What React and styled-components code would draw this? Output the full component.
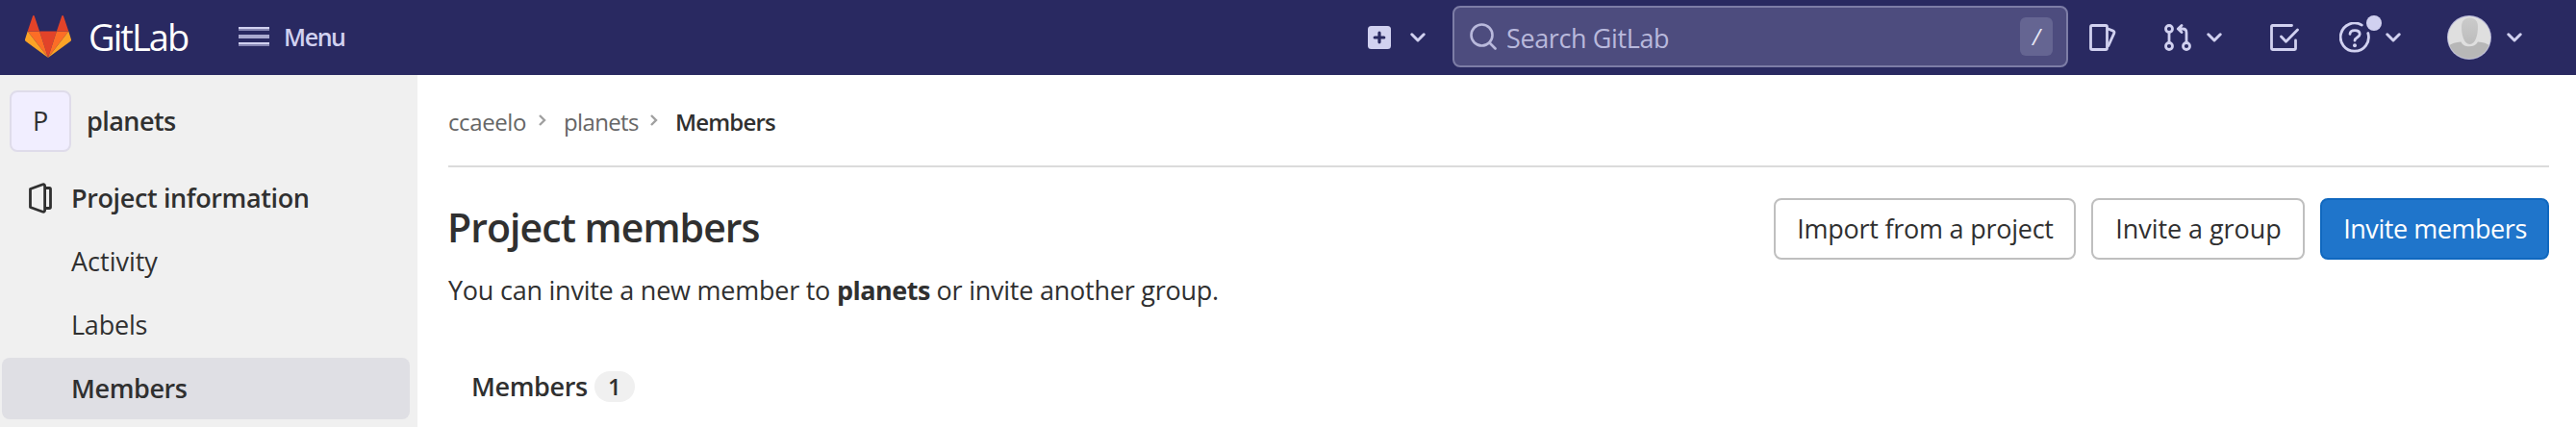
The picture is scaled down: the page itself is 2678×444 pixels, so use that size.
import React from "react";
import styled, { createGlobalStyle } from "styled-components";

const Global = createGlobalStyle`
  * { box-sizing: border-box; }
  body {
    margin: 0;
    background: #fff;
    color: #303030;
    font-family: "Open Sans", "Noto Sans", sans-serif;
    font-size: 27px;
    line-height: 36px;
  }
  svg { display: block; flex: none; }
`;

const Page = styled.div`
  width: 100%;
  height: 444px;
  overflow: hidden;
`;

const Header = styled.header`
  display: flex;
  align-items: center;
  height: 78px;
  padding: 0 56px 0 26px;
  background: #292961;
  color: #d1d1f0;
`;

const Body = styled.div`
  display: flex;
  height: 366px;
`;

const Label = styled.span`
  display: block;
  white-space: nowrap;
  font-size: ${(p) => p.$size || 27}px;
  font-weight: ${(p) => p.$weight || 400};
  letter-spacing: ${(p) => p.$track || 0}px;
  color: ${(p) => p.$color || "inherit"};
`;

const Brand = styled.div`
  display: flex;
  align-items: center;
  width: 222px;
  gap: 18px;
  padding-bottom: 2px;
`;

const MenuButton = styled.div`
  display: flex;
  align-items: center;
  gap: 15px;
  padding-bottom: 2px;
`;

const Actions = styled.div`
  display: flex;
  align-items: center;
  margin-left: auto;
`;

const Action = styled.div`
  display: flex;
  align-items: center;
  gap: ${(p) => p.$gap || 0}px;
  margin-left: ${(p) => p.$before || 0}px;
`;

const SearchBox = styled.div`
  display: flex;
  align-items: center;
  width: 640px;
  height: 64px;
  margin: 0 0 2px 28px;
  padding: 0 14px 0 16px;
  border: 2px solid #7d7da6;
  border-radius: 8px;
  background: #4d4c7e;
  color: #b9b9dc;
`;

const SearchText = styled(Label)`
  flex: 1;
  padding: 3px 0 0 10px;
`;

const Key = styled.kbd`
  width: 34px;
  height: 40px;
  border-radius: 6px;
  background: #656592;
  color: #e6e6f6;
  font: italic 23px/40px "Open Sans", sans-serif;
  text-align: center;
`;

const HelpIcon = styled.div`
  position: relative;
`;

const Dot = styled.i`
  position: absolute;
  top: -7px;
  left: 28px;
  width: 16px;
  height: 16px;
  border-radius: 50%;
  background: #d1d1f0;
`;

const Sidebar = styled.nav`
  flex: none;
  width: 434px;
  padding: 16px 8px 0 2px;
  background: #f0f0f0;
`;

const Context = styled.div`
  display: flex;
  align-items: center;
  gap: 16px;
  height: 64px;
  margin: 0 0 16px 8px;
`;

const ProjectAvatar = styled.div`
  display: flex;
  align-items: center;
  justify-content: center;
  width: 64px;
  height: 64px;
  border: 2px solid #dfdcea;
  border-radius: 8px;
  background: #f1eeff;
`;

const NavItem = styled.div`
  display: flex;
  align-items: center;
  gap: 20px;
  height: 64px;
  margin-bottom: 2px;
  padding: 0 0 1px ${(p) => (p.$child ? 72 : 28)}px;
  border-radius: 8px;
  background: ${(p) => (p.$active ? "#dfdfe4" : "transparent")};
`;

const Main = styled.main`
  flex: 1;
  padding: 0 28px 0 32px;
`;

const Breadcrumbs = styled.div`
  display: flex;
  align-items: center;
  height: 96px;
  padding-top: 3px;
  border-bottom: 2px solid #dbdbdb;
`;

const Crumb = styled(Label)`
  width: ${(p) => p.$width}px;
`;

const Separator = styled.span`
  width: 26px;
  padding-bottom: 3px;
`;

const TitleRow = styled.div`
  display: flex;
  align-items: center;
  justify-content: space-between;
  height: 64px;
  margin-top: 32px;
`;

const Title = styled.h1`
  margin: 0 0 4px -1px;
  font-size: 41px;
  font-weight: 600;
  letter-spacing: -0.95px;
  line-height: 56px;
`;

const ButtonRow = styled.div`
  display: flex;
  gap: 16px;
`;

const Button = styled.button`
  width: ${(p) => p.$width}px;
  height: 64px;
  padding: 0 0 1px 1px;
  border: 2px solid ${(p) => (p.$primary ? "#1068bf" : "#bfbfbf")};
  border-radius: 8px;
  background: ${(p) => (p.$primary ? "#1f75cb" : "#fff")};
  color: ${(p) => (p.$primary ? "#fff" : "#303030")};
  font: 400 27px/36px "Open Sans", sans-serif;
  letter-spacing: ${(p) => p.$track}px;
  white-space: nowrap;
`;

const Intro = styled.p`
  margin: 14px 0 0;
  letter-spacing: -0.24px;
  white-space: nowrap;
  strong { font-weight: 700; letter-spacing: -0.51px; }
`;

const Tab = styled.div`
  display: flex;
  align-items: center;
  gap: 7px;
  height: 32px;
  margin: 66px 0 0 24px;
`;

const Badge = styled.span`
  width: 42px;
  height: 32px;
  border-radius: 16px;
  background: #f0f0f0;
  font-size: 24px;
  font-weight: 600;
  line-height: 32px;
  text-align: center;
`;

const Chevron = () => (
  <svg width="16" height="10" viewBox="0 0 16 10" fill="none" stroke="currentColor" strokeWidth="3" strokeLinecap="round" strokeLinejoin="round">
    <path d="M1.8 1.8 8 8l6.200-6.200" />
  </svg>
);

const CrumbArrow = () => (
  <svg width="8" height="12" viewBox="0 0 8 12" fill="none" stroke="#a0a0a0" strokeWidth="2.4">
    <path d="M1 1l5 5-5 5" />
  </svg>
);

const Logo = () => (
  <svg width="48" height="44" viewBox="0 0 48 44">
    <path fill="#e24329" d="M24 44 15.1 16.5h17.8z" />
    <path fill="#fc6d26" d="M24 44 15.1 16.5H2.7z" />
    <path fill="#fca326" d="M2.7 16.5.1 24.8c-.3.8 0 1.6.7 2.1L24 44z" />
    <path fill="#e24329" d="M2.7 16.5h12.4L9.8.7C9.5-.2 8.3-.2 8 .7z" />
    <path fill="#fc6d26" d="M24 44l8.9-27.5h12.4z" />
    <path fill="#fca326" d="M45.3 16.5l2.6 8.3c.3.8 0 1.6-.7 2.1L24 44z" />
    <path fill="#e24329" d="M45.3 16.5H32.9L38.2.7c.3-.9 1.5-.9 1.8 0z" />
  </svg>
);

const Hamburger = () => (
  <svg width="32" height="20" viewBox="0 0 32 20">
    <path fill="#d1d1f0" d="M0 0h32v2H0zM0 16h32v2H0z" />
    <path fill="#8585b2" d="M0 2h32v2H0zM0 18h32v2H0z" />
    <path fill="#aaaad0" d="M0 8h32v4H0z" />
  </svg>
);

const PlusSquare = () => (
  <svg width="24" height="24" viewBox="0 0 24 24">
    <rect width="24" height="24" rx="3.5" fill="#d1d1f0" />
    <path d="M12 7.200v9.600M7.200 12h9.600" stroke="#292961" strokeWidth="3.2" strokeLinecap="round" />
  </svg>
);

const Magnifier = () => (
  <svg width="28" height="28" viewBox="0 0 28 28" fill="none" stroke="currentColor" strokeWidth="2.6" strokeLinecap="round">
    <circle cx="12.5" cy="12.5" r="11" />
    <path d="M20.5 20.5l6 6" />
  </svg>
);

const Issues = () => (
  <svg width="28" height="28" viewBox="0 0 28 28" fill="none" stroke="currentColor" strokeWidth="2.8" strokeLinejoin="round">
    <rect x="1.5" y="1.5" width="17" height="25" rx="1.5" />
    <path d="M19 4.8l5.8 2.3c1 .4 1.500 1.500 1 2.500L19.500 23.500" />
  </svg>
);

const MergeRequest = () => (
  <svg width="28" height="28" viewBox="0 0 28 28" fill="none" stroke="currentColor" strokeWidth="2.8" strokeLinecap="round" strokeLinejoin="round">
    <circle cx="5" cy="5" r="3.5" />
    <circle cx="5" cy="23" r="3.5" />
    <circle cx="23" cy="23" r="3.5" />
    <path d="M5 9v10M23 19V9c0-2.500-1.500-4-4-4h-4M18 1.500 14.300 5l3.700 3.500" />
  </svg>
);

const Todo = () => (
  <svg width="30" height="28" viewBox="0 0 30 28" fill="none" stroke="currentColor" strokeWidth="2.8" strokeLinecap="round" strokeLinejoin="round">
    <path d="M22.500 1.500h-20a1 1 0 0 0-1 1v23a1 1 0 0 0 1 1h23a1 1 0 0 0 1-1v-8.500" />
    <path d="M11.500 13l5 5.300L28.500 6" />
  </svg>
);

const Question = () => (
  <svg width="32" height="32" viewBox="0 0 32 32" fill="none" stroke="currentColor" strokeWidth="2.8" strokeLinecap="round">
    <path d="M23.300 3.100A14.600 14.600 0 1 0 29.800 11.500" />
    <path d="M11 12.300C11.300 9.800 13.300 8.700 16 8.700c3 0 5.200 1.400 5.200 3.900 0 3.600-5.200 3.300-5.200 6.600" />
    <circle cx="16" cy="24.3" r="2" fill="currentColor" stroke="none" />
  </svg>
);

const UserAvatar = () => (
  <svg width="46" height="46" viewBox="0 0 46 46">
    <defs>
      <clipPath id="face"><circle cx="23" cy="23" r="22" /></clipPath>
      <linearGradient id="shade" x1="0" y1="0" x2="0" y2="1">
        <stop offset="0" stopColor="#cbcbcb" />
        <stop offset="1" stopColor="#bcbcbc" />
      </linearGradient>
    </defs>
    <circle cx="23" cy="23" r="23" fill="#b5b5d6" />
    <g clipPath="url(#face)">
      <rect width="46" height="46" fill="#dfdfdf" />
      <path d="M0 46V33c3-3.500 9-5 14.500-5.500C16 31 19 32.300 23 32.300s7-1.300 9-4.800C38 28 43 29.500 46 33v13z" fill="#b7b7b7" />
      <path d="M15 12c0-6 3-9.500 8.500-9.500S32 6 32 12c0 8-2.500 18-8.500 18S15 20 15 12z" fill="url(#shade)" />
    </g>
  </svg>
);

const ProjectIcon = () => (
  <svg width="24" height="32" viewBox="0 0 24 32" fill="none" stroke="#303030" strokeWidth="2.8" strokeLinejoin="round">
    <path d="M1.500 6.500 14.500 1.800Q16.600 1.300 16.600 3.500v25q0 2.200-2.100 1.700L1.500 25.500z" />
    <path d="M17 5.500h4.300q1.200 0 1.200 1.200v18.600q0 1.200-1.200 1.200H17" />
  </svg>
);

export default function App() {
  return (
    <Page>
      <Global />
      <Header>
        <Brand>
          <Logo />
          <Label $size={38} $track={-1.94} $color="#fff">GitLab</Label>
        </Brand>
        <MenuButton>
          <Hamburger />
          <Label $size={25} $weight={600} $track={-1.4}>Menu</Label>
        </MenuButton>
        <Actions>
          <Action $gap={20}>
            <PlusSquare />
            <Chevron />
          </Action>
          <SearchBox>
            <Magnifier />
            <SearchText $track={-0.39}>Search GitLab</SearchText>
            <Key>/</Key>
          </SearchBox>
          <Action $before={22}><Issues /></Action>
          <Action $before={50} $gap={16}>
            <MergeRequest />
            <Chevron />
          </Action>
          <Action $before={50}><Todo /></Action>
          <Action $before={42} $gap={16}>
            <HelpIcon>
              <Question />
              <Dot />
            </HelpIcon>
            <Chevron />
          </Action>
          <Action $before={48} $gap={16}>
            <UserAvatar />
            <Chevron />
          </Action>
        </Actions>
      </Header>
      <Body>
        <Sidebar>
          <Context>
            <ProjectAvatar>P</ProjectAvatar>
            <Label $weight={600} $track={-0.56}>planets</Label>
          </Context>
          <NavItem>
            <ProjectIcon />
            <Label $weight={600} $track={-0.38}>Project information</Label>
          </NavItem>
          <NavItem $child><Label>Activity</Label></NavItem>
          <NavItem $child><Label $track={-0.22}>Labels</Label></NavItem>
          <NavItem $child $active><Label $weight={600} $track={-0.4}>Members</Label></NavItem>
        </Sidebar>
        <Main>
          <Breadcrumbs>
            <Crumb $size={24} $track={-0.39} $color="#666" $width={94}>ccaeelo</Crumb>
            <Separator><CrumbArrow /></Separator>
            <Crumb $size={24} $track={-0.64} $color="#666" $width={90}>planets</Crumb>
            <Separator><CrumbArrow /></Separator>
            <Crumb $size={24} $weight={600} $track={-0.83} $width={110}>Members</Crumb>
          </Breadcrumbs>
          <TitleRow>
            <Title>Project members</Title>
            <ButtonRow>
              <Button $width={314} $track={-0.25}>Import from a project</Button>
              <Button $width={222} $track={-0.05}>Invite a group</Button>
              <Button $width={238} $track={-0.45} $primary>Invite members</Button>
            </ButtonRow>
          </TitleRow>
          <Intro>You can invite a new member to <strong>planets</strong> or invite another group.</Intro>
          <Tab>
            <Label $weight={600} $track={-0.37}>Members</Label>
            <Badge>1</Badge>
          </Tab>
        </Main>
      </Body>
    </Page>
  );
}
